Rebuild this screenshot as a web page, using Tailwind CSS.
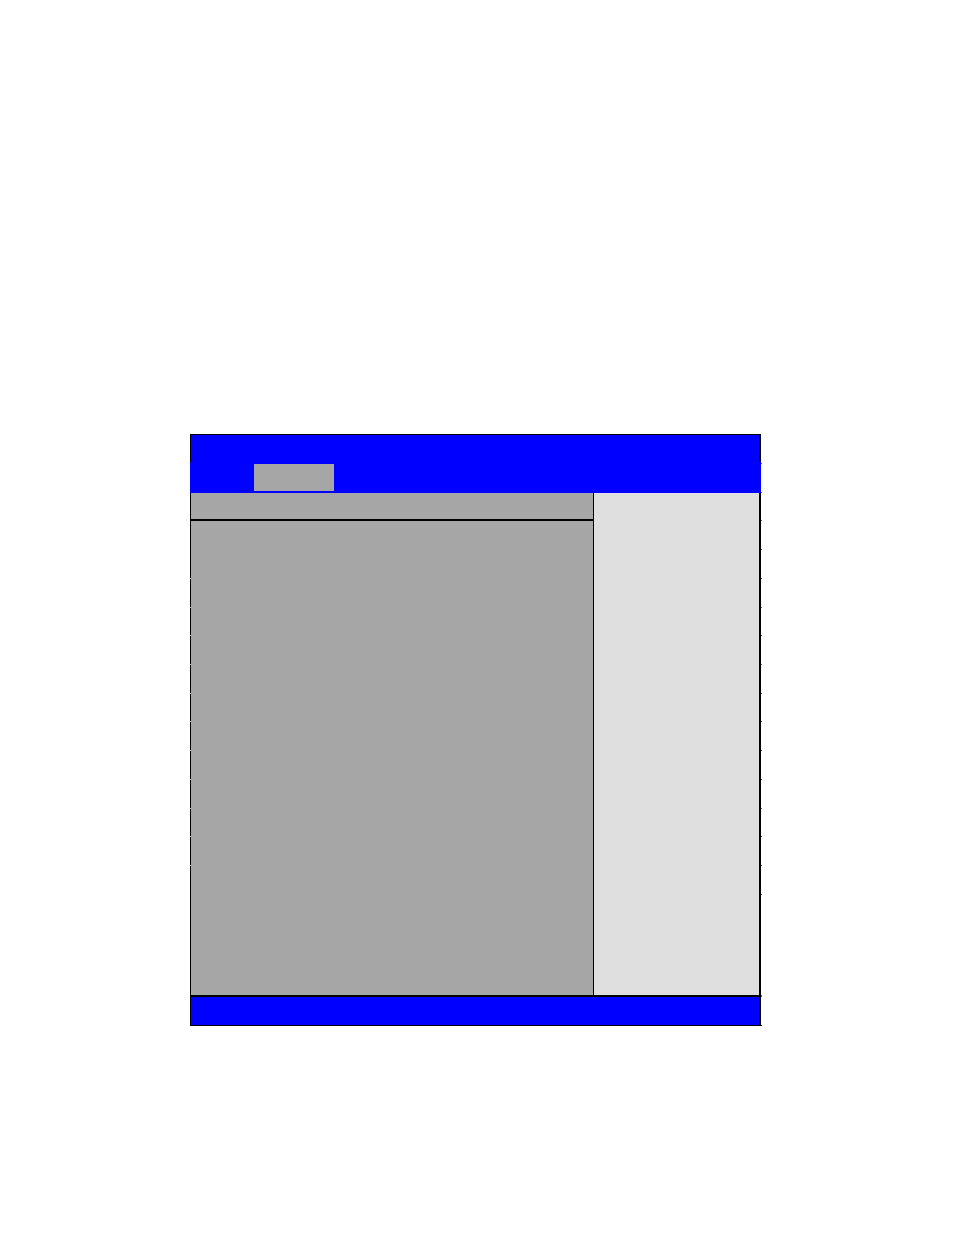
<!DOCTYPE html>
<html lang="en">
<head>
  <meta charset="UTF-8" />
  <meta name="viewport" content="width=device-width, initial-scale=1.0" />
  <title>Setup Utility</title>
  <script src="https://cdn.jsdelivr.net/npm/@tailwindcss/browser@4"></script>
</head>
<body class="bg-white font-['Liberation_Sans',sans-serif]">
  <div class="pt-[434px] pl-[190px] pr-[193px] pb-[207px]">
    <div class="relative">

      <!-- Title bar -->
      <header class="h-7 bg-[#0000ff] border-t border-l border-r-2 border-black"></header>

      <!-- Menu bar, one tab selected -->
      <nav class="h-[31px] pt-[2px] pl-16 bg-[#0000ff]">
        <button type="button" aria-label="Selected menu" class="block w-20 h-[27px] bg-[#a6a6a6]"></button>
      </nav>

      <!-- Settings and help -->
      <main class="flex h-[502px] border-l border-r-2 border-black">
        <section class="flex-1 bg-[#a6a6a6]">
          <div class="h-7 border-b-2 border-black"></div>
        </section>
        <aside class="w-[166px] bg-[#dfdfdf] border-l border-black"></aside>
      </main>

      <footer class="h-[31px] bg-[#0000ff] border-t-2 border-b border-l border-r-2 border-black"></footer>

      <!-- Row marks along the outer edges -->
      <div class="absolute left-full top-[29px] h-[432px] w-px flex flex-col justify-between">
        <i class="h-px bg-[#606060]"></i>
        <i class="h-px bg-[#4040ff]"></i>
        <i class="h-px bg-[#606060]"></i>
        <i class="h-px bg-[#606060]"></i>
        <i class="h-px bg-[#606060]"></i>
        <i class="h-px bg-[#606060]"></i>
        <i class="h-px bg-[#606060]"></i>
        <i class="h-px bg-[#606060]"></i>
        <i class="h-px bg-[#606060]"></i>
        <i class="h-px bg-[#606060]"></i>
        <i class="h-px bg-[#606060]"></i>
        <i class="h-px bg-[#606060]"></i>
        <i class="h-px bg-[#606060]"></i>
        <i class="h-px bg-[#606060]"></i>
        <i class="h-px bg-[#606060]"></i>
        <i class="h-px bg-[#606060]"></i>
      </div>
      <div class="absolute left-full bottom-0 h-[31px] w-px flex flex-col justify-between">
        <i class="h-[2px] bg-[#606060]"></i>
        <i class="h-px bg-black"></i>
      </div>
      <div class="absolute left-0 top-36 h-[288px] w-px flex flex-col justify-between">
        <i class="h-px bg-[#a6a6a6]"></i>
        <i class="h-px bg-[#a6a6a6]"></i>
        <i class="h-px bg-[#a6a6a6]"></i>
        <i class="h-px bg-[#a6a6a6]"></i>
        <i class="h-px bg-[#a6a6a6]"></i>
        <i class="h-px bg-[#a6a6a6]"></i>
        <i class="h-px bg-[#a6a6a6]"></i>
        <i class="h-px bg-[#a6a6a6]"></i>
        <i class="h-px bg-[#a6a6a6]"></i>
        <i class="h-px bg-[#a6a6a6]"></i>
        <i class="h-px bg-[#a6a6a6]"></i>
      </div>
    </div>
  </div>
</body>
</html>
